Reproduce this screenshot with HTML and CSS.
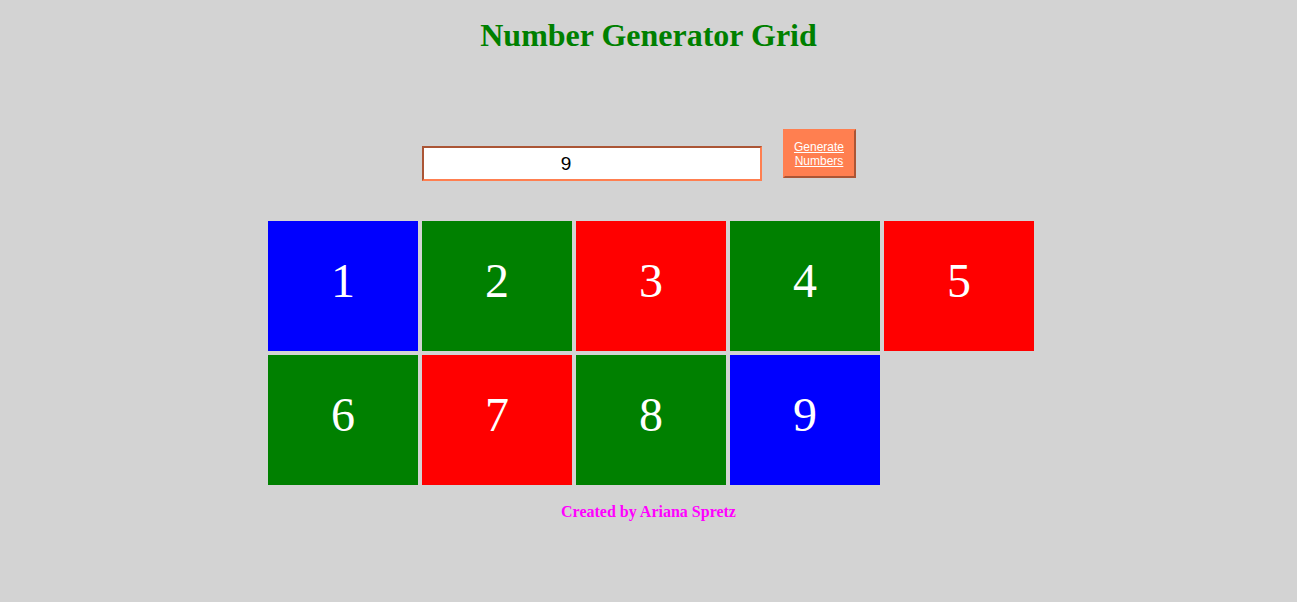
FILE: index.html
```html
<!DOCTYPE html>
<html lang="en">
<head>
<meta charset="utf-8">
<title>Number Generator Grid</title>
<link rel="stylesheet" href="styles.css">
</head>
<body>
<h1 class="title">Number Generator Grid</h1>
<div class="controls">
  <input class="count-input" type="text" value="9">
  <button class="generate-btn" type="button">Generate Numbers</button>
</div>
<div class="grid-wrap">
  <div class="grid">
    <div class="tile tile-blue">1</div>
    <div class="tile tile-green">2</div>
    <div class="tile tile-red">3</div>
    <div class="tile tile-green">4</div>
    <div class="tile tile-red">5</div>
    <div class="tile tile-green">6</div>
    <div class="tile tile-red">7</div>
    <div class="tile tile-green">8</div>
    <div class="tile tile-blue">9</div>
  </div>
</div>
<p class="footer">Created by Ariana Spretz</p>
</body>
</html>
```

FILE: styles.css
```css
html, body {
  margin: 0;
  padding: 0;
}

body {
  background: #d3d3d3;
  font-family: "Liberation Serif", "Times New Roman", serif;
  min-height: 602px;
}

.title {
  margin: 17px 0 0;
  font-size: 32px;
  line-height: 37px;
  font-weight: bold;
  color: #008000;
  text-align: center;
}

.controls {
  display: flex;
  justify-content: center;
  align-items: flex-start;
  gap: 21px;
  margin-top: 75px;
  padding-right: 20px;
}

.count-input {
  box-sizing: border-box;
  width: 340px;
  height: 35px;
  margin-top: 17px;
  padding: 0 55px 0 4px;
  border: 2px inset #ff7f50;
  background: #fff;
  font-family: "Liberation Sans", Arial, sans-serif;
  font-size: 19px;
  color: #000;
  text-align: center;
  outline: none;
}

.generate-btn {
  box-sizing: border-box;
  width: 73px;
  height: 49px;
  padding: 0 7px;
  border: 2px outset #ff7f50;
  background: #ff7f50;
  color: #fff;
  font-family: "Liberation Sans", Arial, sans-serif;
  font-size: 12px;
  line-height: 14px;
  text-decoration: underline;
  cursor: pointer;
}

.grid-wrap {
  display: flex;
  justify-content: center;
  margin-top: 40px;
  padding-left: 5px;
}

.grid {
  display: grid;
  grid-template-columns: repeat(5, 150px);
  grid-auto-rows: 130px;
  gap: 4px;
}

.tile {
  display: flex;
  align-items: center;
  justify-content: center;
  box-sizing: border-box;
  padding-bottom: 11px;
  color: #fff;
  font-size: 48px;
}

.tile-blue { background: #0000ff; }
.tile-green { background: #008000; }
.tile-red { background: #ff0000; }

.footer {
  margin: 18px 0 0;
  font-size: 16px;
  line-height: 18px;
  font-weight: bold;
  color: #ff00ff;
  text-align: center;
}
```
